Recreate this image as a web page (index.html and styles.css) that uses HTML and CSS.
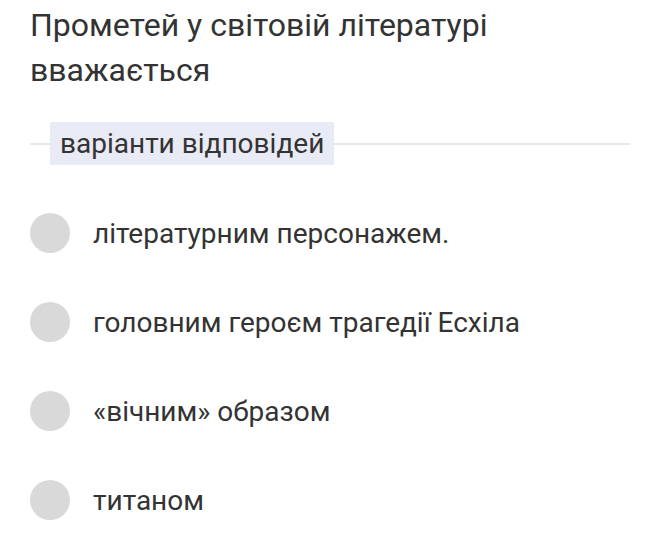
FILE: index.html
```html
<!DOCTYPE html>
<html lang="uk">
  <head>
    <meta charset="UTF-8" />
    <meta name="viewport" content="width=device-width, initial-scale=1.0" />
    <title>Тест</title>
    <link rel="stylesheet" href="styles.css">
  </head>
  <body>
    <div class="container">
      <h1 class="question">Прометей у світовій літературі вважається</h1>

      <div class="legend">
        <span class="legend-line short"></span>
        <span class="legend-label">варіанти відповідей</span>
        <span class="legend-line"></span>
      </div>

      <ul class="answers">
        <li class="answer">
          <span class="radio"></span>
          <span class="answer-text">літературним персонажем.</span>
        </li>
        <li class="answer">
          <span class="radio"></span>
          <span class="answer-text">головним героєм трагедії Есхіла</span>
        </li>
        <li class="answer">
          <span class="radio"></span>
          <span class="answer-text">«вічним» образом</span>
        </li>
        <li class="answer">
          <span class="radio"></span>
          <span class="answer-text">титаном</span>
        </li>
      </ul>
    </div>
  </body>
</html>
```

FILE: styles.css
```css
body {
  margin: 0;
  background: #fff;
  color: #333333;
  font-family: Roboto, "Noto Sans", sans-serif;
}

.container {
  padding: 3px 30px 0 30px;
}

.question {
  margin: 0;
  max-width: 500px;
  font-size: 32px;
  font-weight: 400;
  line-height: 45px;
  color: #333333;
}

.legend {
  display: flex;
  align-items: center;
  margin-top: 29px;
}

.legend-line {
  flex: 1;
  height: 2px;
  background: #e8e8e8;
}

.legend-line.short {
  flex: 0 0 20px;
}

.legend-label {
  padding: 0 10px;
  height: 43px;
  line-height: 43px;
  font-size: 28px;
  background: #e8eaf5;
  color: #333333;
}

.answers {
  list-style: none;
  margin: 48px 0 0 0;
  padding: 0;
}

.answer {
  display: flex;
  align-items: center;
  height: 40px;
  margin-bottom: 49px;
}

.answer:last-child {
  margin-bottom: 0;
}

.radio {
  flex: 0 0 40px;
  height: 40px;
  border-radius: 50%;
  background: #d9d9d9;
}

.answer-text {
  margin-left: 23px;
  font-size: 28px;
  color: #333333;
}
```
